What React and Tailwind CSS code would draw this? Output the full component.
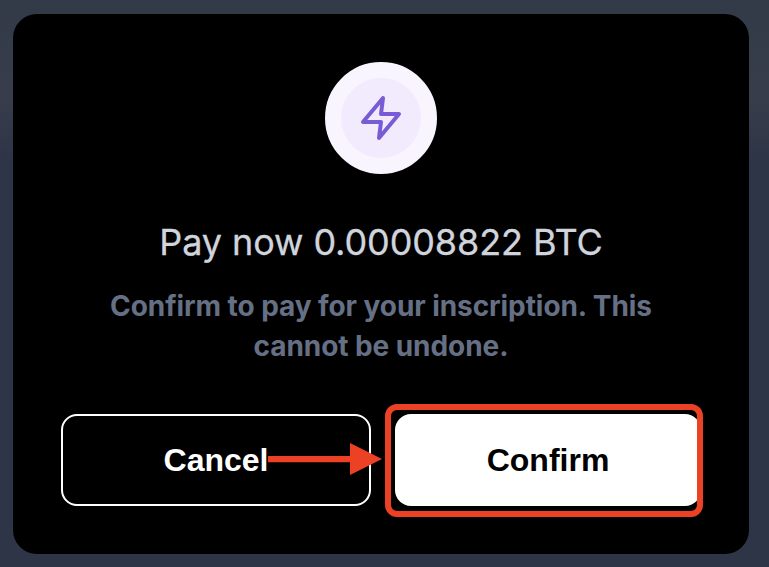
import { useState } from "react";

const AMOUNT = "0.00008822";

export default function App() {
  const [open, setOpen] = useState(true);

  return (
    <main className="h-[567px] w-[769px] overflow-hidden bg-[#2e3545] bg-linear-to-b from-[#323a48] from-0% via-[#373d4b] via-17% to-[#2e3546] to-28% pl-[13px] pt-[14px] font-['Inter',sans-serif]">
      {open && <PayModal amount={AMOUNT} onClose={() => setOpen(false)} />}
    </main>
  );
}

function PayModal({ amount, onClose }) {
  return (
    <div className="flex h-[540px] w-[736px] flex-col items-center rounded-3xl bg-black px-12 pt-12">
      {/* Icon */}
      <div className="flex size-28 shrink-0 items-center justify-center rounded-full border-16 border-[#f8f5ff] bg-[#f1ebfd]">
        <ZapIcon />
      </div>

      <h1 className="mt-10 whitespace-nowrap text-4xl leading-[56px] tracking-[-0.1px] text-[#d0d5dd] [-webkit-text-stroke:0.3px_#d0d5dd]">
        Pay now {amount} BTC
      </h1>
      <p className="mt-4 w-[600px] text-center text-[28px] font-bold leading-10 tracking-[-0.07px] text-[#667085]">
        Confirm to pay for your inscription. This cannot be undone.
      </p>

      {/* Actions */}
      <div className="mt-12 flex w-full gap-6 font-['Liberation_Sans',Arial,sans-serif] text-[32px] font-bold">
        <div className="relative w-[310px] shrink-0">
          <button type="button" onClick={onClose} className="h-[92px] w-full rounded-2xl border-2 border-white text-white">
            Cancel
          </button>
          <Arrow />
        </div>
        <div className="relative w-[306px] shrink-0">
          <button type="button" onClick={onClose} className="h-[92px] w-full rounded-2xl bg-white text-black">
            Confirm
          </button>
          <span className="pointer-events-none absolute -left-2.5 -top-2.5 h-[113px] w-[318px] rounded-xl border-6 border-[#ec4124]" />
        </div>
      </div>
    </div>
  );
}

function ZapIcon() {
  return (
    <svg
      viewBox="0 0 24 24"
      className="size-12 shrink-0"
      fill="none"
      stroke="#7a5bd6"
      strokeWidth="2"
      strokeLinecap="round"
      strokeLinejoin="round"
    >
      <path d="M13 2 3 14h9l-1 8 10-12h-9l1-8z" />
    </svg>
  );
}

/** Pointer from Cancel to Confirm */
function Arrow() {
  return (
    <svg viewBox="0 0 115 32" className="pointer-events-none absolute left-[206px] top-[29px] h-8 w-[115px]" fill="#ec4124">
      <path d="M1 13h82V0l32 16-32 16V19.3H1z" />
    </svg>
  );
}
